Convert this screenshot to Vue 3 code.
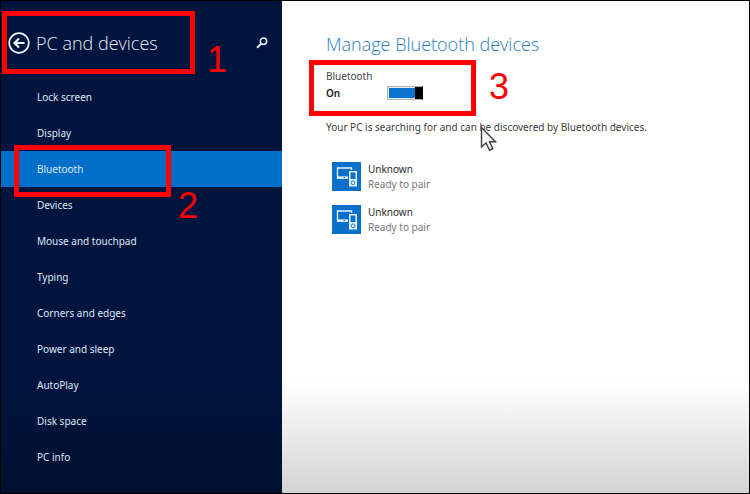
<script setup>
import { ref } from 'vue'

const items = [
  'Lock screen',
  'Display',
  'Bluetooth',
  'Devices',
  'Mouse and touchpad',
  'Typing',
  'Corners and edges',
  'Power and sleep',
  'AutoPlay',
  'Disk space',
  'PC info',
]
const active = ref('Bluetooth')
const enabled = ref(true)
const devices = [
  { id: 1, name: 'Unknown', status: 'Ready to pair' },
  { id: 2, name: 'Unknown', status: 'Ready to pair' },
]
</script>

<template>
  <div class="window">
    <aside class="sidebar">
      <header class="head">
        <button class="icon-button" type="button" aria-label="Back">
          <svg width="22" height="22" viewBox="0 0 22 22" fill="none" stroke="#eaf4ff">
            <circle cx="11" cy="11" r="9.8" stroke-width="1.7" />
            <path d="M16.5 11H6.5M11 6.5L6.5 11L11 15.5" stroke-width="2.2" />
          </svg>
        </button>
        <h1>PC and devices</h1>
        <button class="icon-button" type="button" aria-label="Search">
          <svg width="12" height="12" viewBox="0 0 12 12" fill="none" stroke="#e6effa">
            <circle cx="7.5" cy="4.2" r="3.2" stroke-width="1.5" />
            <path d="M5.2 6.6L1 10.8" stroke-width="2" />
          </svg>
        </button>
      </header>
      <nav>
        <a
          v-for="item in items"
          :key="item"
          href="#"
          :class="{ active: item === active }"
          @click.prevent="active = item"
        >{{ item }}</a>
      </nav>
    </aside>

    <main>
      <h2>Manage Bluetooth devices</h2>
      <label class="caption" for="bt">Bluetooth</label>
      <div class="switch-row">
        <span class="state">{{ enabled ? 'On' : 'Off' }}</span>
        <input id="bt" v-model="enabled" type="checkbox" role="switch" />
      </div>
      <p>Your PC is searching for and can be discovered by Bluetooth devices.</p>
      <ul>
        <li v-for="device in devices" :key="device.id">
          <svg class="tile" width="29" height="29" viewBox="0 0 29 29" fill="none">
            <rect width="29" height="29" fill="#0a6fc8" />
            <path d="M16 15.5H5.5V6H19.5V8" stroke="#e4f2ff" stroke-width="1.4" />
            <path d="M5 15.7H16" stroke="#e4f2ff" stroke-width="2.4" />
            <path d="M11.5 15.7H13" stroke="#0a6fc8" stroke-width="1" />
            <rect x="17" y="9" width="8" height="15.5" fill="#e4f2ff" />
            <rect x="18.5" y="10.5" width="5" height="6.5" fill="#0a6fc8" />
            <circle cx="21" cy="20.8" r="1.9" stroke="#0a6fc8" stroke-width="0.9" />
          </svg>
          <div>
            <div class="name">{{ device.name }}</div>
            <div class="status">{{ device.status }}</div>
          </div>
        </li>
      </ul>
    </main>

    <div class="mark mark-one"></div>
    <div class="mark mark-two"></div>
    <div class="mark mark-three"></div>
    <span class="number number-one">1</span>
    <span class="number number-two">2</span>
    <span class="number number-three">3</span>
    <svg class="pointer" width="17" height="26" viewBox="0 0 17 26">
      <path
        d="M1.5 1.5V21L6 17L9.5 24.3L12.8 22.7L9.5 15.7H15.5Z"
        fill="#f6f6f6"
        stroke="#3f3f3f"
        stroke-width="1.4"
      />
    </svg>
  </div>
</template>

<style>
body {
  margin: 0;
}
</style>

<style scoped>
.window {
  position: relative;
  box-sizing: border-box;
  min-height: 100vh;
  display: flex;
  border: 1px solid #000;
  font-family: "Noto Sans", "Open Sans", sans-serif;
  font-size: 10px;
  background: linear-gradient(#fff, #fff 380px, #d3d3d3 100%);
}
.sidebar {
  flex: 0 0 281px;
  background: linear-gradient(#00143e, #00143e 380px, #00102f 100%);
}
.head {
  display: flex;
  align-items: center;
  height: 78px;
  padding: 6px 14px 0 7px;
  box-sizing: border-box;
}
h1,
h2 {
  font-family: "Open Sans", "Noto Sans", sans-serif;
  font-size: 18px;
  font-weight: 300;
  line-height: 26px;
}
h1 {
  flex: 1;
  margin: 0 0 0 6px;
  color: #e3ebf7;
}
.icon-button {
  display: flex;
  padding: 0;
  border: 0;
  background: none;
}
nav a {
  display: block;
  padding-left: 36px;
  line-height: 36px;
  color: #dfe9f7;
  text-decoration: none;
}
nav a.active {
  background: #006fca;
}
main {
  flex: 1;
  min-width: 0;
  padding: 30px 20px 0 44px;
}
h2 {
  margin: 0 0 9px;
  color: #2a80c0;
}
.caption {
  display: block;
  line-height: 20px;
  color: #444;
}
.switch-row {
  display: flex;
  align-items: center;
  height: 14px;
}
.state {
  width: 61px;
  font-weight: 600;
  color: #222;
}
input {
  appearance: none;
  box-sizing: border-box;
  width: 36px;
  height: 14px;
  margin: 0;
  padding: 1px;
  border: 1px solid #b0b0b0;
  background: linear-gradient(90deg, #000 9px, #a6a6a6 9px) content-box #eee;
}
input:checked {
  border-right-color: #000;
  background:
    linear-gradient(#000, #000) right / 8px 100% no-repeat border-box,
    linear-gradient(#0a74d0, #0a74d0) content-box,
    #e4ecf4;
}
p {
  margin: 17px 0 0;
  line-height: 20px;
  color: #3c3c3c;
}
ul {
  margin: 25px 0 0 6px;
  padding: 0;
  list-style: none;
}
li {
  display: flex;
  gap: 7px;
  margin-bottom: 14px;
  line-height: 15px;
}
.tile {
  flex: none;
}
li > div {
  height: 29px;
}
.name {
  color: #2b2b2b;
}
.status {
  color: #767676;
}
.mark {
  position: absolute;
  box-sizing: border-box;
  border: 5px solid #f00;
}
.mark-one {
  left: 1px;
  top: 10px;
  width: 193px;
  height: 63px;
}
.mark-two {
  left: 13px;
  top: 144px;
  width: 157px;
  height: 52px;
}
.mark-three {
  left: 308px;
  top: 59px;
  width: 167px;
  height: 56px;
}
.number {
  position: absolute;
  font-family: "Liberation Sans", Arial, sans-serif;
  font-size: 36px;
  line-height: 40px;
  color: #f00;
}
.number-one {
  left: 206px;
  top: 39px;
}
.number-two {
  left: 177px;
  top: 185px;
}
.number-three {
  left: 488px;
  top: 66px;
}
.pointer {
  position: absolute;
  left: 479px;
  top: 125px;
}
</style>
